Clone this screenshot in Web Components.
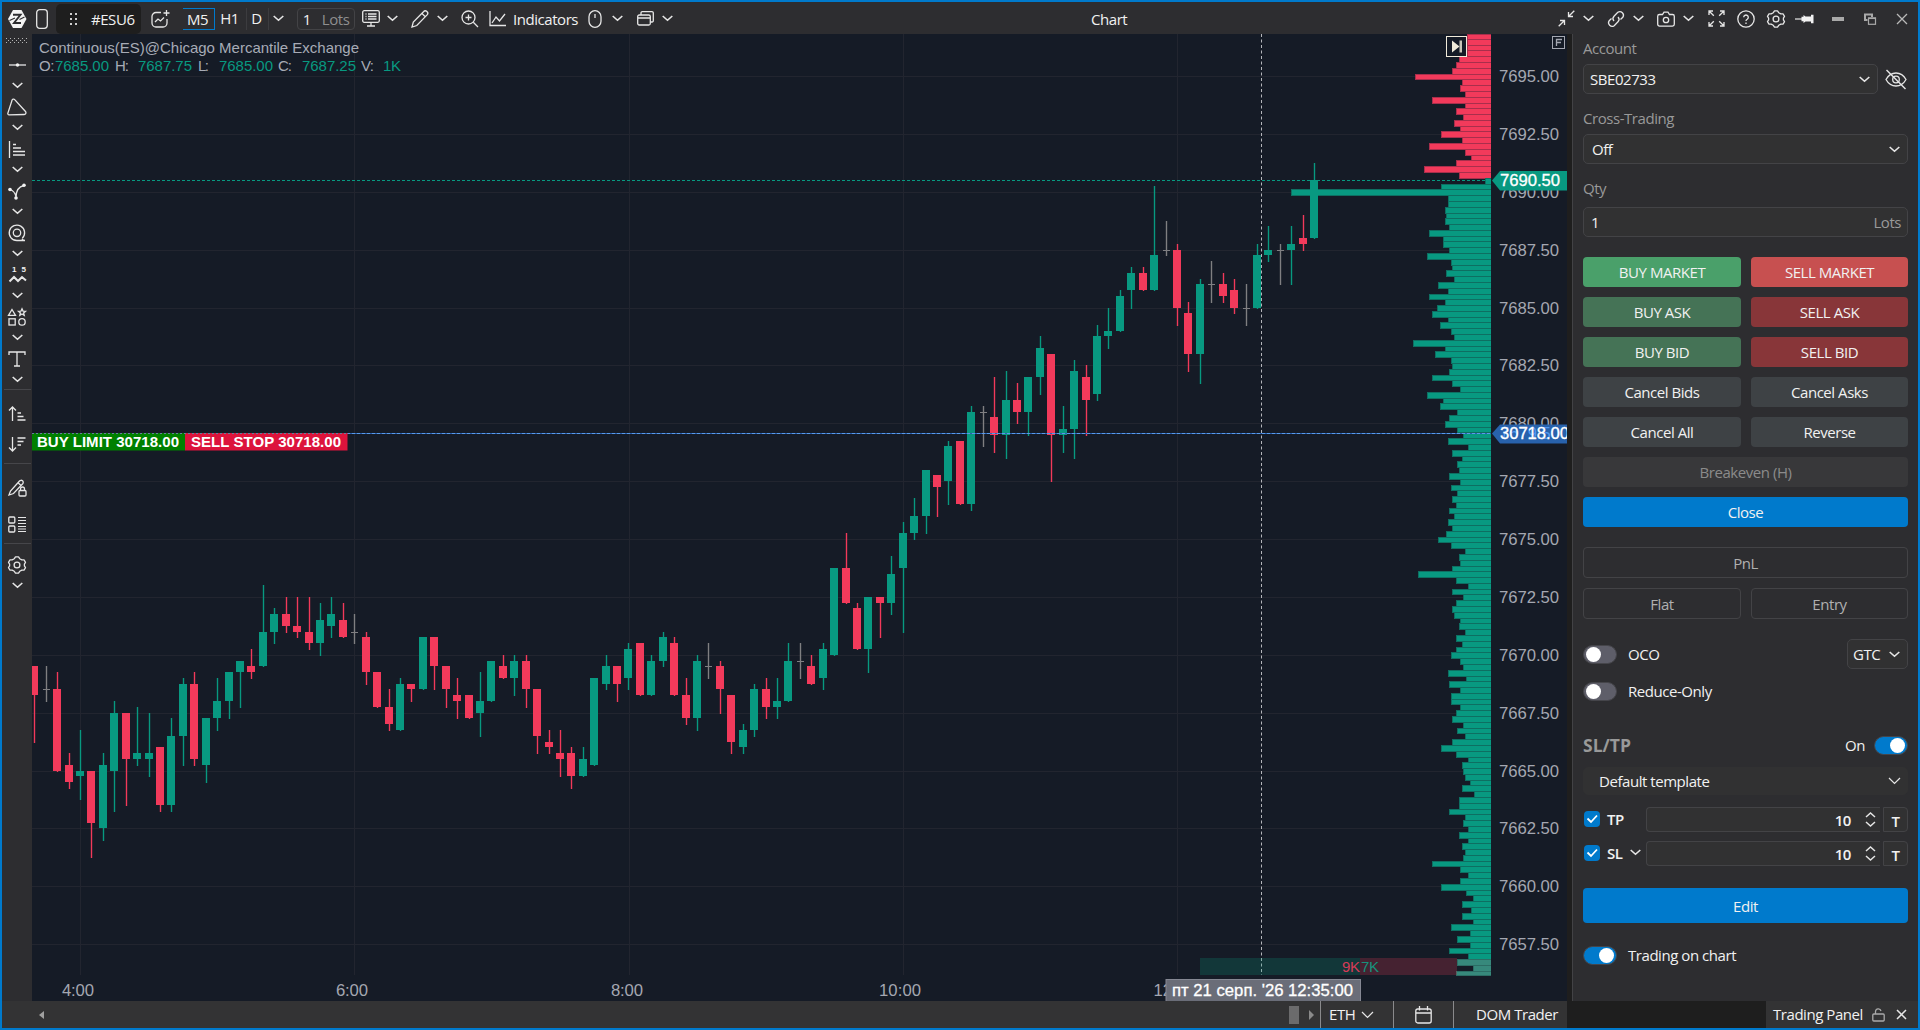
<!DOCTYPE html>
<html lang="en">
<head>
<meta charset="utf-8">
<title>Chart</title>
<style>
  html, body {
    margin: 0;
    height: 100%;
    overflow: hidden;
    background: #1e1e1e;
  }

  body {
    font-family: "Open Sans", "Noto Sans", sans-serif;
    font-size: 15px;
    letter-spacing: -0.45px;
    color: #f1f1f1;
  }
</style>
</head>
<body>

<app-window>
  <title-bar slot="header"></title-bar>
  <tool-rail slot="rail"></tool-rail>
  <price-chart slot="chart"></price-chart>
  <trade-panel slot="panel"></trade-panel>
  <status-bar slot="footer"></status-bar>
</app-window>

<script>
// Small helper: every component clones its markup into an open shadow root
function define(name, html, setup) {
  const template = document.createElement("template");
  template.innerHTML = html;

  window.customElements.define(name, class extends HTMLElement {
    constructor() {
      super();
      this.attachShadow({ mode: "open" });
      this.shadowRoot.appendChild(template.content.cloneNode(true));
    }

    connectedCallback() {
      if (setup) setup(this, this.shadowRoot);
    }
  });
}

// Icons: [width, height, markup], drawn 1:1 in pixels
const ICONS = {
  logo: [20, 20, `<path d="M6 1h8.500L19.500 10l-5 9H6L1 10z" fill="#f4f4f4" stroke="none"/><path d="M6 5.800h7.500L7 14h7" stroke="#2d2d30" stroke-width="1.900"/><path d="M2.500 11.500L8 9M12.500 10.500L17.500 8" stroke="#2d2d30" stroke-width="1.200"/>`],
  phone: [12, 20, `<rect x=".7" y=".7" width="10.600" height="18.600" rx="3"/>`],
  dots: [10, 14, `<g fill="#cfcfcf" stroke="none"><rect x="1" y="1" width="2" height="2"/><rect x="6" y="1" width="2" height="2"/><rect x="1" y="6" width="2" height="2"/><rect x="6" y="6" width="2" height="2"/><rect x="1" y="11" width="2" height="2"/><rect x="6" y="11" width="2" height="2"/></g>`],
  layout: [19, 18, `<path d="M10 2.500H5a4 4 0 0 0-4 4V13a4 4 0 0 0 4 4h7a4 4 0 0 0 4-4V9M15.500 0v6M12.500 3h6M4 12l3-3 2.500 2L13 7.500"/>`],
  chev: [11, 7, `<path d="M.7 1l4.800 4.300L10.300 1" stroke-width="1.600"/>`],
  chevl: [13, 8, `<path d="M1 1l5.500 5.500L12 1" stroke-width="1.200"/>`],
  monitor: [18, 17, `<rect x=".7" y=".7" width="16.600" height="11.600" rx="1.500"/><path d="M9 12.500V16M5 16h8M3.500 4h1M3.500 6.500h1M3.500 9h1M6 4h8.500M6 6.500h8.500M6 9h8.500"/>`],
  pencil: [18, 18, `<path d="M1 17l1.300-5L12.500 1.700a2.300 2.300 0 0 1 3.600 3.200L5.800 15.500zM11 3.500l3.300 3.200"/>`],
  zoom: [18, 18, `<circle cx="7.500" cy="7.500" r="6.500"/><path d="M12.300 12.300L17 17M4.500 7.500h6M7.500 4.500v6"/>`],
  line: [17, 16, `<path d="M1 0v14.500h16M3 12l4-6 3.500 4L16 3"/>`],
  mouse: [14, 18, `<rect x="1" y=".7" width="12" height="16.600" rx="6"/><path d="M7 4v4"/>`],
  windows: [17, 15, `<rect x=".7" y="4" width="12.600" height="10" rx="1.500"/><path d="M1 7h12M4 4V2a1.300 1.300 0 0 1 1.300-1.300H15A1.300 1.300 0 0 1 16.300 2v7.500A1.300 1.300 0 0 1 15 11h-1.500"/>`],
  collapse: [17, 17, `<path d="M16.300.7L10.500 6.500M10.500 2v4.500H15M.7 16.300l5.800-5.800M2 10.500h4.500V15"/>`],
  link: [18, 18, `<path d="M7 11a3.500 3.500 0 0 1 0-4.800L10.800 2.300a3.600 3.600 0 0 1 5 5L13.500 9.500M11 7a3.500 3.500 0 0 1 0 4.800L7.200 15.700a3.600 3.600 0 0 1-5-5L4.500 8.500"/>`],
  camera: [18, 16, `<path d="M2.500 3.500h3L7 1.200h4l1.500 2.300h3a1.800 1.800 0 0 1 1.800 1.800v8a1.800 1.800 0 0 1-1.800 1.800h-13A1.800 1.800 0 0 1 .7 13.300v-8A1.800 1.800 0 0 1 2.500 3.500z"/><circle cx="9" cy="9" r="2.700"/>`],
  expand: [17, 17, `<path d="M1 5V1h4M1 1l4.800 4.800M12 1h4v4M16 1l-4.800 4.800M1 12v4h4M1 16l4.800-4.800M12 16h4v-4M16 16l-4.800-4.800"/>`],
  help: [18, 18, `<circle cx="9" cy="9" r="8.200"/><path d="M6.700 7.300a2.300 2.300 0 1 1 3.500 2c-.9.500-1.200.9-1.200 1.800M9 12.500v1.400"/>`],
  gear: [18, 18, `<path d="M6.300 2.700L7.500.9h3l1.200 1.800 2.200 1.200 2.100-.1 1.500 2.600L16.400 8.200v1.700l1.100 1.700-1.500 2.600-2.100-.1-2.200 1.200-1.200 1.800h-3l-1.200-1.800-2.200-1.200-2.100.1L.5 11.600l1.100-1.700V8.200L.5 6.400 2 3.800l2.100.1z" stroke-linejoin="round"/><circle cx="9" cy="9" r="2.900"/>`],
  pin: [20, 10, `<path d="M0 5h8" stroke-width="1.200"/><path d="M6.500 2.800h2V1l2 1.500h5.500V.8h2.500v8.400H16V7.500h-5.500l-2 1.500V7.200h-2z" fill="#f1f1f1" stroke="none"/>`],
  min: [12, 4, `<rect width="12" height="4" fill="#a9a9a9" stroke="none"/>`],
  restore: [12, 12, `<g stroke="#a9a9a9"><path d="M3.500 7H1V1.500h7V4" stroke-width="2"/><rect x="4.500" y="5" width="7" height="6.300" stroke-width="1.200"/><path d="M4 5.300h8" stroke-width="1.500"/></g>`],
  close: [12, 12, `<path d="M1 1l10 10M11 1L1 11" stroke="#b9b9b9"/>`],
  grip: [22, 6, `<path d="M0 .5h22M0 4.500h22" stroke="#b5b5b5" stroke-width="1" stroke-dasharray="1 3"/><path d="M2 2.500h20" stroke="#b5b5b5" stroke-width="1" stroke-dasharray="1 3"/>`],
  hline: [17, 4, `<path d="M0 2h17"/><circle cx="8.500" cy="2" r="1.700" fill="#f1f1f1" stroke="none"/>`],
  triangle: [20, 18, `<path d="M5 2.500a1.500 1.500 0 0 1 2.700-.8L18.500 13.500a1.800 1.800 0 0 1-1.300 3L2 16.800a1.200 1.200 0 0 1-1.200-1.400z"/>`],
  levels: [18, 17, `<path d="M1.500 0v17M5 3.500h3M5 7h8M5 10.500h12M5 14h12"/>`],
  fork: [18, 17, `<path d="M8 14.500C8 8 11 3.500 16 2.500M2 6.500c3 1 5 3 6 7"/><g fill="#f1f1f1" stroke="none"><circle cx="16" cy="2.200" r="1.800"/><circle cx="2" cy="6.500" r="1.800"/><circle cx="8" cy="15" r="1.800"/></g>`],
  spiral: [18, 18, `<path d="M9 16.500H17M14 14.800c.4 1 1.200 1.700 3 1.700M9 16.500A7.700 7.700 0 1 1 14.300 14.300"/><circle cx="9" cy="8.800" r="3.700"/>`],
  waves: [19, 18, `<path d="M1.500 15.500l4.500-4.500 4 4 4-4 4 3.500" stroke-width="2"/><text x="4" y="6" font-size="8" font-weight="700" fill="#f1f1f1" stroke="none">1</text><text x="13.500" y="6" font-size="8" font-weight="700" fill="#f1f1f1" stroke="none">5</text>`],
  shapes: [18, 18, `<path d="M4 1.500L7.500 7.300h-7zM14 .8l1 2.300 2.500.2-1.900 1.600.6 2.400L14 6l-2.200 1.300.6-2.400-1.900-1.600 2.500-.2z"/><rect x="1" y="10.800" width="6.200" height="6.200"/><circle cx="14" cy="13.900" r="3.200"/>`],
  text: [18, 16, `<path d="M1 4V1h16v3M9 1v14M6 15h6"/>`],
  sortup: [18, 17, `<path d="M4.500 16V2M1 5.500L4.500 2 8 5.500M9.500 8h3.500M9.500 11.500h6M9.500 15h8"/>`],
  sortdown: [18, 17, `<path d="M4.500 1v14M1 11.500L4.500 15 8 11.500M9.500 2h8M9.500 5.500h6M9.500 9h3.500"/>`],
  penlock: [19, 18, `<path d="M1 16l1.500-4L11.500 2a2 2 0 0 1 3.200 2.800L5.500 14.500zM10 3.800l2.800 2.500"/><rect x="11" y="11.500" width="7" height="5.500" rx="1"/><path d="M12.500 11.500V10a2 2 0 0 1 4 0v1.500"/>`],
  list: [18, 17, `<rect x=".8" y="1" width="6" height="6" rx="1"/><rect x=".8" y="10" width="6" height="6" rx="1"/><path d="M10 1.500h8M10 4.500h8M10 7.500h8M10 10.500h8M10 13h8M10 15.500h8" stroke-width="1.100"/>`],
  eye: [22, 21, `<path d="M1 10.500C3.500 6 7 4 11 4s7.500 2 10 6.500c-2.500 4.500-6 6.500-10 6.500S3.500 15 1 10.500z"/><circle cx="11" cy="10.500" r="3.300"/><path d="M1.500 1L20.500 20" stroke-width="1.500"/>`],
  spin: [11, 15, `<path d="M1 5l4.500-4L10 5M1 10l4.500 4L10 10" stroke-width="1.500"/>`],
  lock: [13, 14, `<rect x=".8" y="6" width="11.400" height="7" rx="1" stroke="#aaa"/><path d="M3.500 6V3.500A2.800 2.800 0 0 1 9 3" stroke="#aaa"/>`],
  x: [11, 11, `<path d="M1 1l9 9M10 1L1 10" stroke-width="1.500"/>`],
  calendar: [17, 18, `<rect x=".8" y="3" width="15.400" height="14" rx="2"/><path d="M1 7h15M4.500 0v4.500M12.500 0v4.500"/>`],
  left: [6, 8, `<path d="M5 0v8L0 4z" fill="#a0a0a0" stroke="none"/>`],
  right: [6, 10, `<path d="M1 0v10L6 5z" fill="#8a8a8a" stroke="none"/>`],
};

define("ui-icon", `
<style>
  :host {
    display: inline-flex;
    flex: none;
    color: #e6e6e6;
  }

  svg {
    display: block;
    overflow: visible;
    fill: none;
    stroke: currentColor;
    stroke-width: 1.3;
    font-family: "Liberation Sans", sans-serif;
    letter-spacing: 0;
  }
</style>
<span></span>
`, (el, root) => {
  const [w, h, body] = ICONS[el.getAttribute("name")];
  root.querySelector("span").innerHTML =
    `<svg width="${w}" height="${h}" viewBox="0 0 ${w} ${h}">${body}</svg>`;
});

define("app-window", `
<style>
  :host {
    display: grid;
    box-sizing: border-box;
    width: 1920px;
    height: 1030px;
    border: 2px solid #007acc;
    grid-template: 32px 967px 27px / 30px 1535px 351px;
    background: #1e1e1e;
  }

  .header, .footer {
    grid-column: 1 / -1;
  }

  div {
    display: grid;
    min-width: 0;
    min-height: 0;
  }
</style>
<div class="header"><slot name="header"></slot></div>
<div><slot name="rail"></slot></div>
<div><slot name="chart"></slot></div>
<div><slot name="panel"></slot></div>
<div class="footer"><slot name="footer"></slot></div>
`);

define("title-bar", `
<style>
  :host {
    display: flex;
    justify-content: space-between;
    background: #2d2d30;
    position: relative;
  }

  .side {
    display: flex;
    align-items: center;
    box-sizing: border-box;
    height: 32px;
    padding-top: 1px;
  }

  .side > * {
    flex: none;
  }

  .symbol {
    display: flex;
    align-items: center;
    box-sizing: border-box;
    width: 85px;
    height: 30px;
    margin-left: 8px;
    padding-left: 13px;
    gap: 12px;
    border-radius: 5px;
    background: #1e1e1e;
  }

  .tf {
    box-sizing: border-box;
    height: 22px;
    line-height: 20px;
    text-align: center;
  }

  .active {
    width: 32px;
    margin-left: 13px;
    padding-right: 2px;
    border: 1px solid #007acc;
    border-left: none;
  }

  .split {
    padding-right: 2px;
    border-right: 1px solid #3c3c3f;
  }

  .lots {
    display: flex;
    align-items: center;
    justify-content: center;
    gap: 11px;
    box-sizing: border-box;
    width: 58px;
    height: 22px;
    margin-left: 13px;
    border: 1px solid #434346;
    border-radius: 4px;
    color: #f1f1f1;
  }

  .lots span:last-child {
    color: #8f8f8f;
  }

  .title {
    position: absolute;
    left: 1089px;
    top: 7px;
    line-height: 20px;
  }
</style>
<div class="side">
  <ui-icon name="logo" style="margin-left:5px"></ui-icon>
  <ui-icon name="phone" style="margin-left:9px"></ui-icon>
  <div class="symbol"><ui-icon name="dots"></ui-icon><span>#ESU6</span></div>
  <ui-icon name="layout" style="margin-left:10px"></ui-icon>
  <span class="tf active">M5</span>
  <span class="tf split" style="width:32px">H1</span>
  <span class="tf split" style="width:22px">D</span>
  <ui-icon name="chev" style="margin-left:4px"></ui-icon>
  <div class="lots"><span>1</span><span>Lots</span></div>
  <ui-icon name="monitor" style="margin-left:7px"></ui-icon>
  <ui-icon name="chev" style="margin-left:7px"></ui-icon>
  <ui-icon name="pencil" style="margin-left:13px"></ui-icon>
  <ui-icon name="chev" style="margin-left:8px"></ui-icon>
  <ui-icon name="zoom" style="margin-left:13px"></ui-icon>
  <ui-icon name="line" style="margin-left:10px"></ui-icon>
  <span style="margin-left:7px;width:67px">Indicators</span>
  <ui-icon name="mouse" style="margin-left:8px"></ui-icon>
  <ui-icon name="chev" style="margin-left:10px"></ui-icon>
  <ui-icon name="windows" style="margin-left:14px"></ui-icon>
  <ui-icon name="chev" style="margin-left:8px"></ui-icon>
</div>
<span class="title">Chart</span>
<div class="side">
  <ui-icon name="collapse"></ui-icon>
  <ui-icon name="chev" style="margin-left:8px"></ui-icon>
  <ui-icon name="link" style="margin-left:13px"></ui-icon>
  <ui-icon name="chev" style="margin-left:8px"></ui-icon>
  <ui-icon name="camera" style="margin-left:13px"></ui-icon>
  <ui-icon name="chev" style="margin-left:8px"></ui-icon>
  <ui-icon name="expand" style="margin-left:14px"></ui-icon>
  <ui-icon name="help" style="margin-left:12px"></ui-icon>
  <ui-icon name="gear" style="margin-left:12px"></ui-icon>
  <ui-icon name="pin" style="margin-left:10px"></ui-icon>
  <ui-icon name="min" style="margin-left:17px"></ui-icon>
  <ui-icon name="restore" style="margin-left:20px"></ui-icon>
  <ui-icon name="close" style="margin:0 10px 0 20px"></ui-icon>
</div>
`);

define("rail-tool", `
<style>
  :host {
    display: flex;
    flex: none;
    flex-direction: column;
    align-items: center;
    height: 42px;
  }

  div {
    display: flex;
    align-items: center;
    height: 24px;
  }

  .more {
    height: 17px;
  }
</style>
<div></div>
<div class="more"><ui-icon name="chev"></ui-icon></div>
`, (el, root) => {
  const icon = document.createElement("ui-icon");
  icon.setAttribute("name", el.getAttribute("icon"));
  root.querySelector("div").replaceChildren(icon);
});

define("tool-rail", `
<style>
  :host {
    display: flex;
    flex-direction: column;
    align-items: center;
    background: #2d2d30;
  }

  .grip {
    height: 15px;
    padding-top: 4px;
  }

  .one {
    display: flex;
    flex: none;
    align-items: center;
    height: 24px;
  }

  hr {
    flex: none;
    width: 27px;
    height: 1px;
    margin: 0;
    border: none;
    background: #46464a;
  }
</style>
<ui-icon class="grip" name="grip"></ui-icon>
<rail-tool icon="hline"></rail-tool>
<rail-tool icon="triangle"></rail-tool>
<rail-tool icon="levels"></rail-tool>
<rail-tool icon="fork"></rail-tool>
<rail-tool icon="spiral"></rail-tool>
<rail-tool icon="waves"></rail-tool>
<rail-tool icon="shapes"></rail-tool>
<rail-tool icon="text"></rail-tool>
<hr>
<div class="one" style="margin-top:11px"><ui-icon name="sortup"></ui-icon></div>
<div class="one" style="margin-top:7px"><ui-icon name="sortdown"></ui-icon></div>
<hr style="margin-top:7px">
<div class="one" style="margin-top:12px"><ui-icon name="penlock"></ui-icon></div>
<div class="one" style="margin-top:12px"><ui-icon name="list"></ui-icon></div>
<hr style="margin-top:7px">
<rail-tool icon="gear" style="margin-top:9px"></rail-tool>
`);

// Candles, one per 5 minutes: kind (g up, r down, d doji), then high, body
// top, body bottom and low, counted in ticks of 0.25 below 7695.00
const CANDLES = `
r 102 102 107 115,d 102 106 106 108,r 103 106 120 120,r 117 119 122 123,
g 113 120 121 125,r 120 120 129 135,g 117 119 130 132,g 108 110 120 127,
r 110 110 118 126,g 109 117 118 119,g 110 117 118 121,r 116 116 126 127,
g 111 114 126 127,g 104 105 114 119,r 103 105 118 119,g 111 111 119 122,
g 104 108 111 113,g 103 103 108 111,g 101 101 103 109,r 99 102 103 104,
g 88 96 102 102,g 92 93 96 98,r 90 93 95 96,r 90 95 96 97,
r 90 96 98 99,g 91 94 98 100,g 90 93 95 97,r 91 94 97 97,
d 93 96 96 98,r 96 97 103 105,r 103 103 109 109,r 106 109 112 113,
g 104 105 113 113,r 105 105 106 108,g 97 97 106 106,r 97 97 102 106,
r 102 102 106 109,r 104 107 108 111,r 107 107 111 111,g 103 108 110 114,
g 101 101 108 108,r 100 102 104 104,g 100 101 104 107,r 100 101 106 109,
r 106 106 114 117,r 113 115 116 117,r 113 117 118 121,r 116 117 121 123,
g 116 118 121 121,g 104 104 119 119,g 100 102 105 106,r 102 102 105 108,
g 98 99 104 106,r 98 98 107 107,g 100 101 107 107,g 96 97 101 102,
r 97 98 107 107,r 104 107 111 112,g 100 101 111 113,d 98 102 102 104,
r 101 102 106 110,r 107 107 115 117,g 112 113 116 117,g 105 106 113 114,
r 104 106 109 111,g 104 108 109 111,g 98 101 108 108,d 98 101 101 104,
r 100 102 105 105,g 98 99 104 106,g 85 85 100 100,r 79 85 91 91,
r 91 92 99 99,g 90 90 99 103,r 90 90 91 97,g 83 86 91 93,
g 77 79 85 96,g 73 76 79 80,g 68 68 76 79,r 69 69 71 76,
g 63 64 70 74,r 63 63 74 74,g 57 58 74 75,d 57 58 58 64,
r 52 59 62 65,g 51 56 62 66,r 53 56 58 60,g 52 52 58 62,
g 45 47 52 55,r 48 48 62 70,g 57 61 62 65,g 49 51 61 66,
r 50 52 56 62,g 43 45 55 56,g 40 44 45 47,g 37 38 44 44,
g 33 34 37 40,r 33 34 37 37,g 19 31 37 37,d 25 30 30 31,
r 29 30 40 43,r 39 41 48 51,g 35 36 48 53,d 32 36 36 39,
r 34 36 38 39,r 35 37 40 41,d 36 40 40 43,g 29 31 40 40,
g 26 30 31 32,d 29 30 30 36,g 26 29 30 36,r 24 28 29 30,
g 15 18 28 28`.trim().split(",");

// Volume profile: bar length per tick, the first one is 7696.75
const PROFILE = [
  24, 24, 24, 24, 32, 35, 39, 76, 29, 31, 26, 59, 26, 35, 28, 37, 31, 50, 29, 62,
  26, 20, 35, 67, 32, 6, 50, 200, 43, 43, 46, 45, 46, 42, 62, 48, 48, 42, 64, 40,
  39, 45, 37, 53, 43, 62, 46, 54, 59, 43, 51, 40, 37, 78, 46, 56, 40, 39, 42, 59,
  39, 31, 64, 48, 51, 34, 42, 46, 34, 28, 43, 23, 39, 29, 34, 32, 42, 31, 40, 34,
  39, 35, 42, 37, 43, 39, 45, 53, 40, 26, 32, 31, 39, 73, 35, 23, 39, 28, 35, 39,
  37, 31, 32, 26, 35, 29, 35, 40, 31, 28, 43, 25, 42, 31, 40, 40, 31, 35, 39, 28,
  34, 26, 39, 50, 35, 23, 29, 28, 26, 21, 29, 17, 32, 32, 42, 26, 28, 23, 32, 23,
  29, 26, 28, 59, 31, 23, 31, 50, 25, 18, 29, 20, 29, 18, 40, 21, 34, 21, 42, 23,
  34, 18, 35,
];

const UP = "#089981";
const DOWN = "#f23a5b";
const tickY = (t) => 76.5 + t * 5.7875;

function rect(x, y, w, h, fill, extra = "") {
  return `<rect x="${x}" y="${y}" width="${w}" height="${h}" fill="${fill}" ${extra}/>`;
}

function label(x, y, text, width, fill, extra = "") {
  return `<text x="${x}" y="${y}" textLength="${width}" fill="${fill}" ${extra}>${text}</text>`;
}

function drawGrid() {
  let out = "";
  for (let t = 0; t <= 150; t += 10) {
    out += rect(32, Math.round(tickY(t) - 0.5), 1459, 1, "#22252f");
  }
  for (const x of [80, 354, 629, 903, 1177]) {
    out += rect(x, 34, 1, 941, "#22252f");
  }
  return out;
}

function drawProfile() {
  return PROFILE.map((len, i) => {
    const t = i - 7;
    const top = Math.max(34, Math.round(tickY(t - 0.5)));
    const bottom = Math.min(975, Math.round(tickY(t + 0.5)));
    let fill = t < 18 ? DOWN : UP;
    let edge = t < 18 ? "#a82f4c" : "#0e6f62";
    if (t > 152) {
      fill = "#37897c";
      edge = "#2c6d65";
    }
    return rect(1491 - len, top, len, bottom - top + 1, edge)
      + rect(1492 - len, top + 1, len - 1, bottom - top - 1, fill);
  }).join("");
}

function drawCandles() {
  return CANDLES.map((row, i) => {
    const [kind, ...ticks] = row.trim().split(" ");
    const [high, top, bottom, low] = ticks.map((t) => Math.round(tickY(+t) - 0.5));
    const x = Math.round(80 + (i - 4) * 11.427);
    const fill = { g: UP, r: DOWN, d: "#7f7f82" }[kind];
    const wick = rect(x, high, 1, low - high + 1, fill)
      + rect(x - 1, high, 3, low - high + 1, fill, 'opacity=".18"');
    if (kind === "d") return wick + rect(x - 3, top, 7, 1, fill);
    return wick + rect(x - 4, top, 8, bottom - top, fill);
  }).join("");
}

function drawPrices() {
  let out = "";
  for (let t = 0; t <= 150; t += 10) {
    out += label(1499, tickY(t) + 5.5, (7695 - t / 4).toFixed(2), 60, "#a4a7b1", 'font-size="16.700"');
  }
  return out;
}

function drawHeader() {
  const y = 71;
  const grey = "#a7abb6";
  return label(39, 53, "Continuous(ES)@Chicago Mercantile Exchange", 320, grey)
    + label(39, y, "O:", 15.500, grey) + label(55, y, "7685.00", 54, UP)
    + label(115, y, "H:", 14, grey) + label(138, y, "7687.75", 54, UP)
    + label(198, y, "L:", 11, grey) + label(219, y, "7685.00", 54, UP)
    + label(278, y, "C:", 14, grey) + label(302, y, "7687.25", 54, UP)
    + label(361, y, "V:", 13, grey) + label(383, y, "1K", 18, UP);
}

define("price-chart", `
<style>
  :host {
    display: block;
    overflow: hidden;
    background: #151b26;
  }

  svg {
    display: block;
    font-family: "Liberation Sans", Arial, sans-serif;
    font-size: 15px;
    letter-spacing: 0;
  }
</style>
<svg width="1535" height="967" viewBox="32 34 1535 967"></svg>
`, (el, root) => {
  root.querySelector("svg").innerHTML = [
    drawGrid(),
    drawHeader(),
    `<path d="M1261.500 34V975" stroke="#b4b5ba" stroke-dasharray="3 2.500"/>`,
    drawProfile(),
    drawCandles(),

    // session volume strip
    rect(1200, 958, 160, 17, "#089981", 'opacity=".22"'),
    rect(1360, 958, 97, 17, "#f23a5b", 'opacity=".22"'),
    label(1342, 972, "9K", 18, "#d63b58"),
    label(1361, 972, "7K", 18, "#16907c"),

    // last price
    `<path d="M32 180.500H1491" stroke="${UP}" stroke-dasharray="3 2"/>`,
    drawPrices(),
    `<path d="M1492 180.500L1500 171H1567V190.500H1500z" fill="${UP}"/>`,
    label(1500, 186, "7690.50", 60, "#fff", 'font-size="16.700" stroke="#fff" stroke-width=".3"'),

    // pending order line
    rect(32, 433, 1459, 1, "#2b62b5"),
    `<path d="M32 433.500H1491" stroke="#5a9be8" stroke-dasharray="3 2"/>`,
    `<path d="M1492 433.500L1500 424.500H1567V443.500H1500z" fill="#2862ac"/>`,
    label(1500, 439, "7679.50", 60, "#4f97f0", 'font-size="16.700"'),
    label(1500, 439, "30718.00", 69, "#fff", 'font-size="16.700" stroke="#fff" stroke-width=".3"'),
    rect(32, 433, 153, 17.500, "#008000"),
    rect(185, 433, 162.500, 17.500, "#dc143c"),
    `<path d="M32 433.500H347" stroke="#667f9b" stroke-dasharray="2 2"/>`,
    label(37, 446.500, "BUY LIMIT 30718.00", 142, "#fff", 'font-weight="700"'),
    label(191, 446.500, "SELL STOP 30718.00", 150, "#fff", 'font-weight="700"'),

    // time axis
    label(62, 996, "4:00", 32, "#a4a7b1", 'font-size="16.700"'),
    label(336, 996, "6:00", 32, "#a4a7b1", 'font-size="16.700"'),
    label(611, 996, "8:00", 32, "#a4a7b1", 'font-size="16.700"'),
    label(879, 996, "10:00", 42, "#a4a7b1", 'font-size="16.700"'),
    label(1153.500, 996, "12:00", 42, "#a4a7b1", 'font-size="16.700"'),
    rect(1166, 979.500, 194.500, 22, "#6a6d78", 'stroke="#858893"'),
    label(1172, 996, "пт 21 серп. '26 12:35:00", 181, "#fff", 'font-size="16.700" stroke="#fff" stroke-width=".3"'),

    // jump to last bar, fixed scale toggle
    rect(1446.500, 36.500, 20, 20, "#151b26", 'stroke="#f0ead9"'),
    `<path d="M1452 40.500V52.500L1459.500 46.500z" fill="#f0ead9"/>`,
    rect(1459.500, 40.500, 2.500, 12, "#c9c5b8"),
    rect(1552.500, 36.500, 12, 12, "none", 'stroke="#a4a7b1"'),
    `<path d="M1556.500 46V39.500H1562M1556 42.500H1561" fill="none" stroke="#a4a7b1" stroke-width="1.300"/>`,
  ].join("");
});

define("trade-button", `
<style>
  :host {
    display: flex;
    align-items: center;
    justify-content: center;
    box-sizing: border-box;
    height: 30px;
    border-radius: 4px;
    background: var(--fill, #3e4245);
    color: #f1f1f1;
  }

  :host([kind="buy-market"]) { --fill: #4aa06a; }
  :host([kind="sell-market"]) { --fill: #c75050; }
  :host([kind="buy"]) { --fill: #457356; }
  :host([kind="sell"]) { --fill: #883639; }
  :host([kind="primary"]) { --fill: #007acc; }

  :host([kind="off"]) {
    --fill: #38383a;
    color: #8b8b8b;
  }

  :host([kind="outline"]) {
    --fill: transparent;
    height: 31px;
    border: 1px solid #434346;
    color: #b0b0b0;
  }
</style>
<slot></slot>
`);

define("select-box", `
<style>
  :host {
    display: flex;
    align-items: center;
    justify-content: space-between;
    box-sizing: border-box;
    height: 30px;
    padding: 0 7px 0 8px;
    border: 1px solid #434346;
    border-radius: 5px;
    background: #313132;
  }

  ::slotted(.unit) {
    color: #9a9a9a;
  }
</style>
<slot></slot>
<slot name="end"><ui-icon name="chev"></ui-icon></slot>
`);

define("toggle-switch", `
<style>
  :host {
    display: flex;
    align-items: center;
    flex: none;
    box-sizing: border-box;
    width: 34px;
    height: 19px;
    padding: 0 2px;
    border: 1px solid #45454a;
    border-radius: 10px;
    background: #5e5e69;
  }

  :host([on]) {
    justify-content: flex-end;
    background: #007acc;
  }

  i {
    width: 15px;
    height: 15px;
    border-radius: 50%;
    background: #fff;
  }
</style>
<i></i>
`);

define("level-row", `
<style>
  :host {
    display: flex;
    align-items: center;
    height: 25px;
  }

  .check {
    flex: none;
    width: 16px;
    height: 16px;
    margin-left: 1px;
    margin-top: -1px;
    border-radius: 4px;
    background: #007acc;
  }

  svg {
    display: block;
    fill: none;
    stroke: #fff;
    stroke-width: 1.8;
  }

  .name {
    display: flex;
    align-items: center;
    gap: 7px;
    width: 39px;
    margin: -2px 0 0 7px;
    font-weight: 600;
  }

  .value, .tick {
    display: flex;
    align-items: center;
    box-sizing: border-box;
    height: 25px;
    border: 1px solid #434346;
    background: #313132;
    font-weight: 600;
  }

  .value {
    flex: 1;
    justify-content: flex-end;
    gap: 14px;
    padding-right: 4px;
    border-right: none;
    border-radius: 4px 0 0 4px;
  }

  .tick {
    justify-content: center;
    width: 25px;
    margin-left: 3px;
    padding-top: 2px;
    border-radius: 0 4px 4px 0;
  }
</style>
<div class="check"><svg width="16" height="16"><path d="M3.500 7.500l3.500 3.500 6-6.500"/></svg></div>
<div class="name"><slot></slot></div>
<div class="value"><span></span><ui-icon name="spin"></ui-icon></div>
<div class="tick">T</div>
`, (el, root) => {
  root.querySelector(".value span").textContent = el.getAttribute("value");
});

define("trade-panel", `
<style>
  :host {
    display: flex;
    flex-direction: column;
    box-sizing: border-box;
    padding: 4px 10px 0;
    border: solid #424245;
    border-width: 0 0 0 1px;
    margin-left: 5px;
    background: #2d2d30;
  }

  label {
    height: 20px;
    line-height: 20px;
    color: #999;
  }

  .row {
    display: flex;
    align-items: center;
    gap: 11px;
  }

  .row select-box:first-child {
    width: 295px;
  }

  .grid {
    display: grid;
    grid-template-columns: 158px 157px;
    gap: 10px;
    margin-top: 20px;
  }

  .wide {
    grid-column: 1 / -1;
  }

  .end {
    margin-left: auto;
  }

  h3 {
    margin: 0;
    font-size: 17.500px;
    font-weight: 700;
    letter-spacing: 0;
    color: #999;
  }
</style>
<label>Account</label>
<div class="row" style="margin-top:6px;gap:7px">
  <select-box style="padding-left:6px">SBE02733</select-box>
  <ui-icon name="eye"></ui-icon>
</div>
<label style="margin-top:14px">Cross-Trading</label>
<select-box style="margin-top:6px">Off</select-box>
<label style="margin-top:14px">Qty</label>
<select-box style="margin-top:9px;padding:0 6px 0 7px">1<span class="unit" slot="end">Lots</span></select-box>

<div class="grid">
  <trade-button kind="buy-market">BUY MARKET</trade-button>
  <trade-button kind="sell-market">SELL MARKET</trade-button>
  <trade-button kind="buy">BUY ASK</trade-button>
  <trade-button kind="sell">SELL ASK</trade-button>
  <trade-button kind="buy">BUY BID</trade-button>
  <trade-button kind="sell">SELL BID</trade-button>
  <trade-button>Cancel Bids</trade-button>
  <trade-button>Cancel Asks</trade-button>
  <trade-button>Cancel All</trade-button>
  <trade-button>Reverse</trade-button>
  <trade-button kind="off" class="wide">Breakeven (H)</trade-button>
  <trade-button kind="primary" class="wide">Close</trade-button>
</div>
<div class="grid">
  <trade-button kind="outline" class="wide">PnL</trade-button>
  <trade-button kind="outline">Flat</trade-button>
  <trade-button kind="outline">Entry</trade-button>
</div>

<div class="row" style="margin-top:20px;height:30px">
  <toggle-switch></toggle-switch><span>OCO</span>
  <select-box class="end" style="width:61px;padding-left:5px">GTC</select-box>
</div>
<div class="row" style="margin-top:12px;height:20px">
  <toggle-switch></toggle-switch><span>Reduce-Only</span>
</div>

<div class="row" style="margin-top:32px;height:24px;gap:9px">
  <h3>SL/TP</h3>
  <span class="end">On</span><toggle-switch on></toggle-switch>
</div>
<select-box style="margin-top:10px;height:28px;padding:0 6px 0 15px;border-color:#313132">
  Default template<ui-icon slot="end" name="chevl"></ui-icon>
</select-box>
<level-row value="10" style="margin-top:12px">TP</level-row>
<level-row value="10" style="margin-top:9px">SL<ui-icon name="chev"></ui-icon></level-row>
<trade-button kind="primary" style="margin-top:22px;height:35px">Edit</trade-button>
<div class="row" style="margin-top:22px;height:20px">
  <toggle-switch on></toggle-switch><span>Trading on chart</span>
</div>
`);

define("status-bar", `
<style>
  :host {
    display: flex;
    background: #1e1e1e;
    line-height: 27px;
  }

  div {
    display: flex;
    align-items: center;
    box-sizing: border-box;
    background: #333334;
  }

  .scroll {
    width: 1319px;
    padding: 0 6px 0 37px;
    border-right: 1px solid #8a8a8c;
  }

  .thumb {
    width: 10px;
    height: 18px;
    margin: 0 9px 0 auto;
    background: #6b6b6c;
  }

  .session {
    gap: 6px;
    width: 73px;
    padding-left: 8px;
    border-right: 1px solid #8a8a8c;
  }

  .date {
    justify-content: center;
    width: 60px;
    border-right: 1px solid #8a8a8c;
  }

  .dom {
    width: 113px;
    padding-left: 22px;
  }

  .tab {
    width: 152px;
    margin-left: auto;
    padding-left: 7px;
  }
</style>
<div class="scroll">
  <ui-icon name="left"></ui-icon>
  <span class="thumb"></span>
  <ui-icon name="right"></ui-icon>
</div>
<div class="session">ETH<ui-icon name="chevl"></ui-icon></div>
<div class="date"><ui-icon name="calendar"></ui-icon></div>
<div class="dom">DOM Trader</div>
<div class="tab">
  <span>Trading Panel</span>
  <ui-icon name="lock" style="margin-left:9px"></ui-icon>
  <ui-icon name="x" style="margin-left:11px"></ui-icon>
</div>
`);
</script>
</body>
</html>
